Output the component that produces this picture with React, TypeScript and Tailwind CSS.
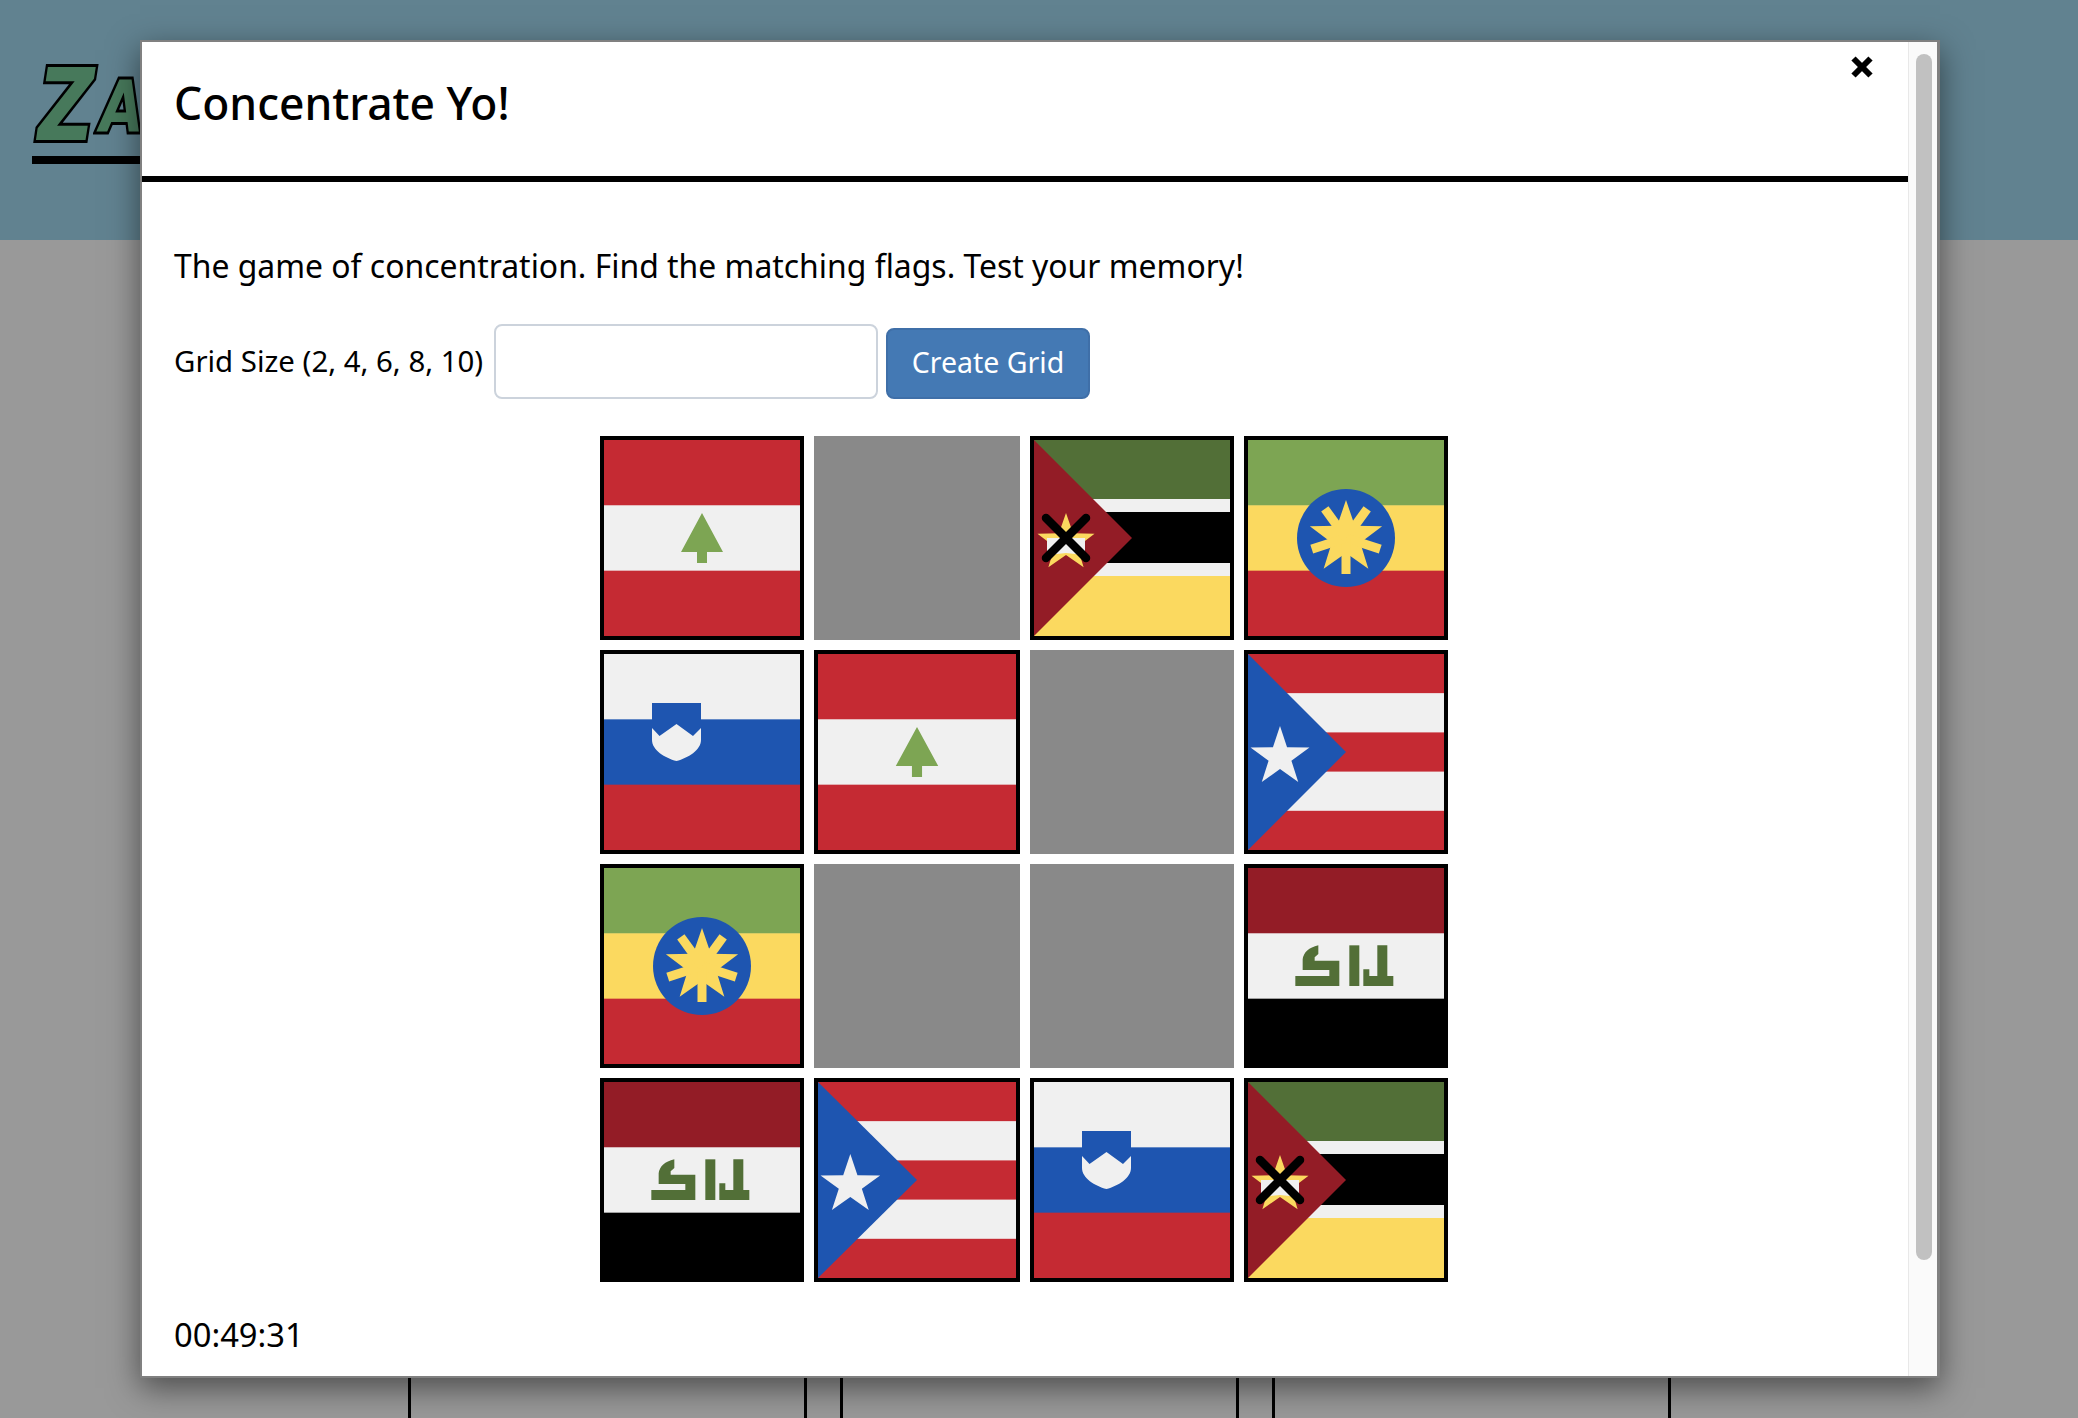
import React from "react";

const RED = "#c52a33";
const WHITE = "#f0f0f0";
const GREEN = "#7da553";
const DARK_GREEN = "#526f37";
const DARK_RED = "#931c26";
const YELLOW = "#fbd95f";
const BLUE = "#1e55b0";

function starPoints(cx: number, cy: number, R: number, r: number) {
  const pts: string[] = [];
  for (let i = 0; i < 10; i++) {
    const rad = i % 2 === 0 ? R : r;
    const a = (Math.PI / 5) * i - Math.PI / 2;
    pts.push(`${cx + rad * Math.cos(a)},${cy + rad * Math.sin(a)}`);
  }
  return pts.join(" ");
}

function Stripes({ colors }: { colors: string[] }) {
  const h = 196 / colors.length;
  return (
    <>
      {colors.map((c, i) => (
        <rect key={i} x="0" y={i * h} width="196" height={h + 0.5} fill={c} />
      ))}
    </>
  );
}

function Lebanon() {
  return (
    <>
      <Stripes colors={[RED, WHITE, RED]} />
      <polygon points="98,73 119,112 103,112 103,123 93,123 93,112 77,112" fill={GREEN} />
    </>
  );
}

function Mozambique() {
  return (
    <>
      <rect x="0" y="0" width="196" height="60" fill={DARK_GREEN} />
      <rect x="0" y="59" width="196" height="13" fill={WHITE} />
      <rect x="0" y="72" width="196" height="52" fill="#000" />
      <rect x="0" y="123" width="196" height="13" fill={WHITE} />
      <rect x="0" y="136" width="196" height="60" fill={YELLOW} />
      <polygon points="0,0 98,98 0,196" fill={DARK_RED} />
      <polygon points={starPoints(32, 103, 30, 12)} fill={YELLOW} />
      <path d="M13 98 H51 V115 L32 113 L13 115 Z" fill={WHITE} />
      <line x1="12" y1="78" x2="52" y2="118" stroke="#000" strokeWidth="8.5" strokeLinecap="round" />
      <line x1="52" y1="78" x2="12" y2="118" stroke="#000" strokeWidth="8.5" strokeLinecap="round" />
    </>
  );
}

function Ethiopia() {
  const rays = [36, 108, 180, 252, 324];
  return (
    <>
      <Stripes colors={[GREEN, YELLOW, RED]} />
      <circle cx="98" cy="98" r="49" fill={BLUE} />
      <polygon points={starPoints(98, 98, 38, 15)} fill={YELLOW} />
      {rays.map((a) => (
        <rect key={a} x="93.5" y="62" width="9" height="36" fill={YELLOW} transform={`rotate(${a} 98 98)`} />
      ))}
    </>
  );
}

function Slovenia() {
  return (
    <>
      <Stripes colors={[WHITE, BLUE, RED]} />
      <rect x="48" y="49" width="49" height="20" fill={BLUE} />
      <path d="M48 74 L55.5 82 L72.5 70 L89 82 L97 74 V86 C97 96 84 104 72.5 107 C61 104 48 96 48 86 Z" fill={WHITE} />
    </>
  );
}

function PuertoRico() {
  return (
    <>
      <Stripes colors={[RED, WHITE, RED, WHITE, RED]} />
      <polygon points="0,0 98,98 0,196" fill={BLUE} />
      <polygon points={starPoints(32, 103, 31, 12)} fill={WHITE} />
    </>
  );
}

function Iraq() {
  return (
    <>
      <Stripes colors={[DARK_RED, WHITE, "#000"]} />
      <g fill={DARK_GREEN} transform="translate(32 62) scale(0.3333)">
        <path d="M115 46 V72 L104 82 V92 H178 V168 H46 V138 H148 V120 H68 V88 Q72 56 115 46 Z" />
        <rect x="208" y="46" width="30" height="122" />
        <path d="M292 46 H322 V138 H340 V168 H250 V118 H268 V138 H292 Z" />
      </g>
    </>
  );
}

const FLAGS: Record<string, () => React.ReactElement> = {
  lebanon: Lebanon,
  mozambique: Mozambique,
  ethiopia: Ethiopia,
  slovenia: Slovenia,
  puertorico: PuertoRico,
  iraq: Iraq,
};

const TILES = [
  "lebanon", "", "mozambique", "ethiopia",
  "slovenia", "lebanon", "", "puertorico",
  "ethiopia", "", "", "iraq",
  "iraq", "puertorico", "slovenia", "mozambique",
];

function Tile({ flag }: { flag: string }) {
  if (!flag) return <div className="h-[204px] bg-[#898989]" />;
  const Flag = FLAGS[flag];
  return (
    <div className="h-[204px] border-4 border-black">
      <svg viewBox="0 0 196 196" preserveAspectRatio="none" className="block w-full h-full">
        <Flag />
      </svg>
    </div>
  );
}

export default function App() {
  return (
    <div className="relative w-[2078px] h-[1418px] overflow-hidden bg-[#999999] font-['Noto_Sans','Open_Sans',sans-serif] text-black">
      {/* page behind the backdrop */}
      <div className="h-[240px] bg-[#618290] pl-[32px] pt-[56px]">
        <div className="flex items-end w-[300px] h-[100px] italic font-bold font-['DejaVu_Sans',sans-serif] text-[#47795b] [-webkit-text-stroke:6px_black] [paint-order:stroke_fill]">
          <span className="w-[62px] ml-[6px] shrink-0 origin-bottom-left scale-x-[0.78] text-[100px] leading-[100px]">Z</span>
          <span className="shrink-0 origin-bottom-left scale-x-[0.78] text-[72px] leading-[100px]">AC</span>
        </div>
        <div className="w-[120px] h-[8px] bg-black" />
      </div>
      <div className="flex justify-center gap-[33px] h-[1178px]">
        <div className="w-[399px] border-x-[3px] border-black" />
        <div className="w-[399px] border-x-[3px] border-black" />
        <div className="w-[399px] border-x-[3px] border-black" />
      </div>

      {/* modal */}
      <div className="absolute left-[140px] top-[40px] w-[1800px] h-[1338px] flex bg-white border-2 border-r-[3px] border-[#808080] shadow-[0_10px_30px_rgba(0,0,0,0.5)]">
        <div className="relative flex-1">
          <div className="h-[140px] border-b-[6px] border-black pl-[32px] pt-[31px]">
            <h1 className="text-[44.4px] leading-[60px] font-medium">Concentrate Yo!</h1>
          </div>
          <svg viewBox="0 0 22 22" className="absolute top-[14px] right-[35px] w-[22px] h-[22px]">
            <line x1="2.5" y1="2.5" x2="19.5" y2="19.5" stroke="#000" strokeWidth="6" />
            <line x1="19.5" y1="2.5" x2="2.5" y2="19.5" stroke="#000" strokeWidth="6" />
          </svg>

          <div className="pl-[32px]">
            <p className="pt-[62px] text-[31.9px] leading-[44px]">
              The game of concentration. Find the matching flags. Test your memory!
            </p>

            <div className="mt-[36px] flex items-end h-[75px]">
              <label className="self-center pb-[2px] text-[29.4px] leading-[40px] w-[320px] whitespace-nowrap">Grid Size (2, 4, 6, 8, 10)</label>
              <input className="w-[384px] h-[75px] bg-white border-2 border-[#ccd3dc] rounded-[8px]" />
              <button className="ml-[8px] w-[204px] h-[71px] pb-[4px] bg-[#4479b4] border-2 border-[#3f6fa8] rounded-[8px] text-white text-[28.5px] leading-[40px]">
                Create Grid
              </button>
            </div>

            <div className="mt-[37px] ml-[426px] grid grid-cols-[204px_206px_204px_204px] gap-[10px] w-[848px]">
              {TILES.map((f, i) => (
                <Tile key={i} flag={f} />
              ))}
            </div>

            <div className="mt-[31px] text-[32.7px] leading-[44px]">00:49:31</div>
          </div>
        </div>

        {/* scrollbar */}
        <div className="w-[29px] bg-[#fafafa] border-l border-[#e8e8e8] pt-[12px] pl-[7px]">
          <div className="w-[16px] h-[1206px] rounded-full bg-[#c1c1c1]" />
        </div>
      </div>
    </div>
  );
}
